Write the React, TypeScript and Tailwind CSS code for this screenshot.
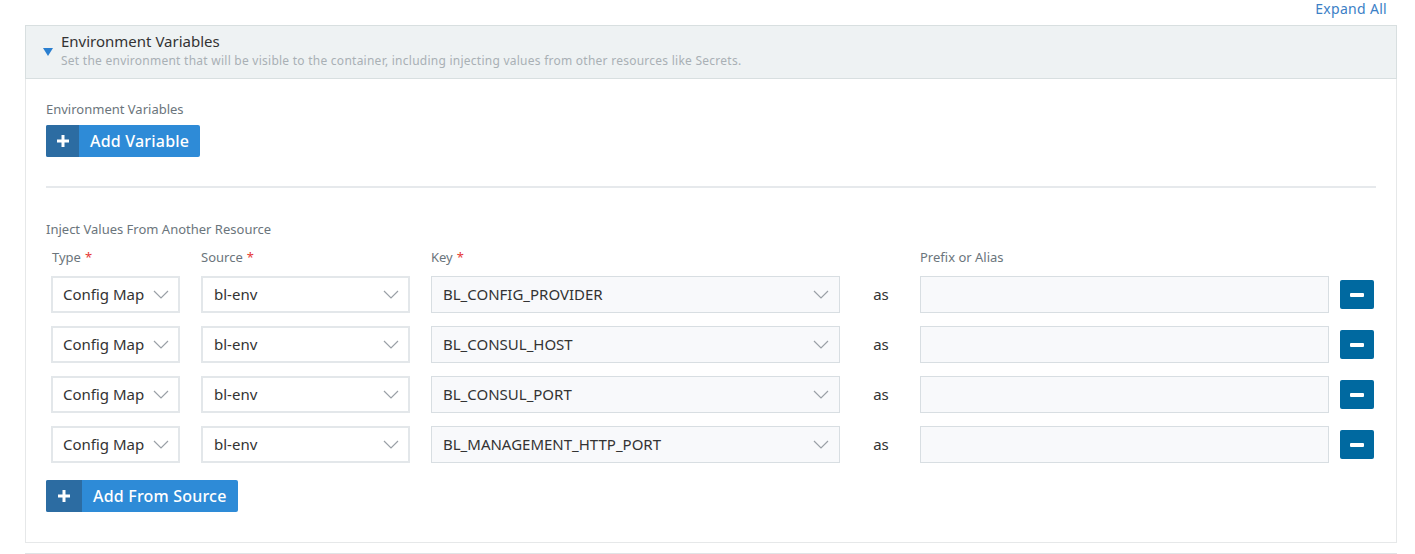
// Environment variables panel
// Collapsible section with "Add Variable" and the inject-from-resource rows

const rows = [
  { type: "Config Map", source: "bl-env", key: "BL_CONFIG_PROVIDER" },
  { type: "Config Map", source: "bl-env", key: "BL_CONSUL_HOST" },
  { type: "Config Map", source: "bl-env", key: "BL_CONSUL_PORT" },
  { type: "Config Map", source: "bl-env", key: "BL_MANAGEMENT_HTTP_PORT" },
]

function Chevron() {
  return (
    <svg width="16" height="9" viewBox="0 0 16 9" className="shrink-0">
      <path d="M1 1l7 7 7-7" fill="none" stroke="#9aa0a6" strokeWidth="1.2" />
    </svg>
  )
}

function Required() {
  return <span className="text-[#e53935] ml-[4px]">*</span>
}

function BlueButton({ label, iconWidth }: { label: string; iconWidth: string }) {
  return (
    <button className="flex h-[32px] items-stretch rounded-[2px] overflow-hidden bg-[#2e8bd7] text-white">
      <span className={`${iconWidth} flex items-center justify-center bg-[#2c6ca2]`}>
        <svg width="12" height="12" viewBox="0 0 12 12">
          <path d="M6 0v12M0 6h12" stroke="white" strokeWidth="3" />
        </svg>
      </span>
      <span className="flex items-center pl-[11px] pr-[11px] text-[16px] font-medium tracking-[0.2px]">
        {label}
      </span>
    </button>
  )
}

export default function App() {
  return (
    <div className="w-[1415px] h-[554px] overflow-hidden bg-white font-['Noto_Sans',sans-serif] text-[#333]">
      {/* Expand all link */}
      <div className="flex justify-end h-[25px] pr-[28px]">
        <span className="text-[14px] leading-[18px] tracking-[0.3px] text-[#3b80c6]">Expand All</span>
      </div>

      <div className="ml-[25px] mr-[18px]">
        {/* Section header */}
        <div className="flex h-[54px] border border-[#d8dfe0] bg-[#eef2f3]">
          <div className="w-[35px] flex justify-end pt-[22px] pr-[8px]">
            <svg width="10" height="8" viewBox="0 0 10 8">
              <path d="M0 0h10L5 8z" fill="#2a7fd0" />
            </svg>
          </div>
          <div className="pt-[4px]">
            <div className="text-[15px] leading-[22px] text-[#333]">Environment Variables</div>
            <div className="mt-[3px] text-[12px] leading-[12px] tracking-[0.25px] text-[#a9b0b5]">
              Set the environment that will be visible to the container, including injecting values from other resources like Secrets.
            </div>
          </div>
        </div>

        {/* Section body */}
        <div className="border-x border-b border-[#e6e8e9] px-[20px] pt-[22px] pb-[30px]">
          <div className="text-[13px] leading-[16px] text-[#6b757c]">Environment Variables</div>
          <div className="mt-[8px] flex">
            <BlueButton label="Add Variable" iconWidth="w-[33px]" />
          </div>

          <div className="mt-[29px] h-[2px] bg-[#e6e9ec]" />

          <div className="mt-[33px] text-[13px] leading-[16px] text-[#6b757c]">
            Inject Values From Another Resource
          </div>

          {/* Column labels */}
          <div className="mt-[12px] flex pl-[6px] text-[13px] leading-[16px] text-[#6b757c]">
            <div className="w-[149px]">Type<Required /></div>
            <div className="w-[230px]">Source<Required /></div>
            <div className="w-[489px]">Key<Required /></div>
            <div>Prefix or Alias</div>
          </div>

          {/* Rows */}
          <div className="mt-[11px] flex flex-col gap-[13px] pl-[5px]">
            {rows.map((r, i) => (
              <div key={i} className="flex items-center h-[37px]">
                <div className="w-[129px] h-[37px] border-2 border-[#e3e7ea] bg-white flex items-center justify-between pl-[10px] pr-[9px]">
                  <span className="text-[15px]">{r.type}</span>
                  <Chevron />
                </div>
                <div className="ml-[21px] w-[209px] h-[37px] border-2 border-[#e3e7ea] bg-white flex items-center justify-between pl-[11px] pr-[9px]">
                  <span className="text-[15px]">{r.source}</span>
                  <Chevron />
                </div>
                <div className="ml-[21px] w-[409px] h-[37px] border border-[#d8dee2] bg-[#f8f9fb] flex items-center justify-between pl-[11px] pr-[10px]">
                  <span className="text-[15px]">{r.key}</span>
                  <Chevron />
                </div>
                <div className="w-[80px] text-center text-[15px] pl-[2px]">as</div>
                <div className="w-[409px] h-[37px] border border-[#d8dee2] bg-[#f8f9fb]" />
                <button className="ml-[11px] w-[34px] h-[29px] rounded-[2px] bg-[#0069a0] flex items-center justify-center">
                  <span className="block w-[14px] h-[4px] bg-white rounded-[1px]" />
                </button>
              </div>
            ))}
          </div>

          <div className="mt-[17px] flex">
            <BlueButton label="Add From Source" iconWidth="w-[36px]" />
          </div>
        </div>

        {/* Next collapsed section edge */}
        <div className="mt-[10px] border-t border-[#e0e3e5]" />
      </div>
    </div>
  )
}
